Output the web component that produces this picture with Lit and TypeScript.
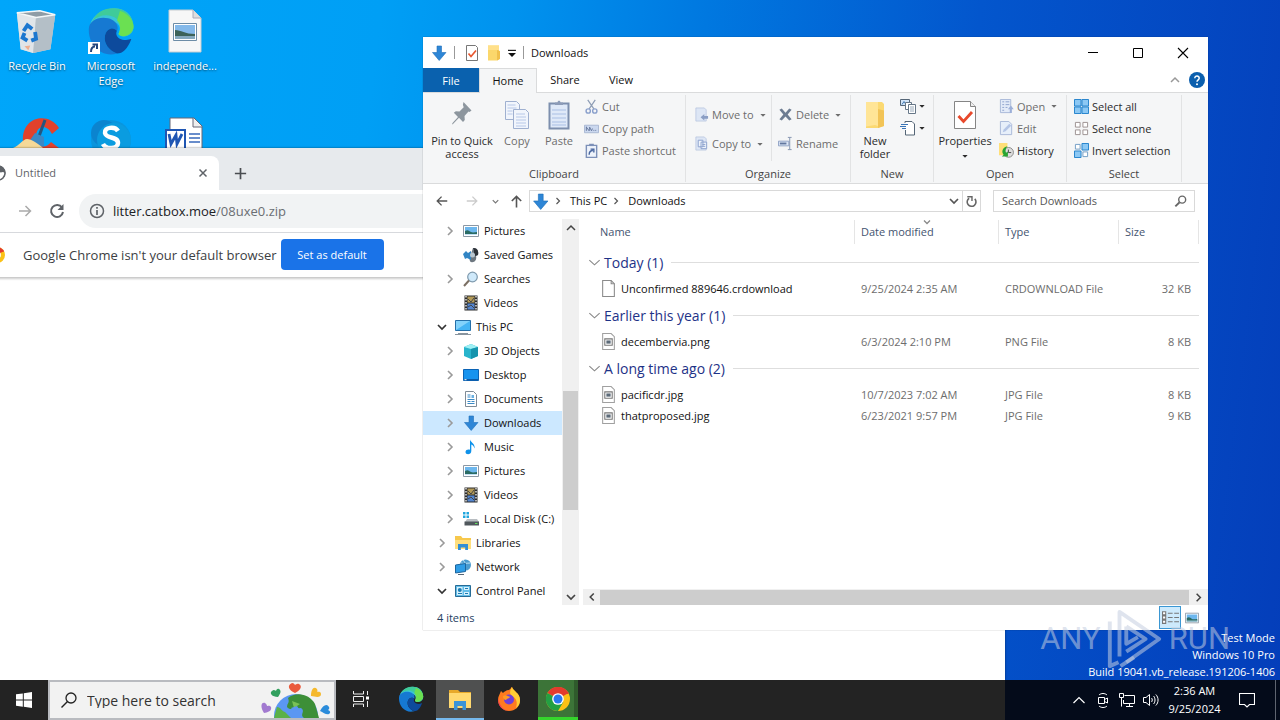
import { LitElement, html, css, svg, nothing } from "lit";
import { customElement } from "lit/decorators.js";
import { classMap } from "lit/directives/class-map.js";

const art: Record<string, unknown> = {
  down: svg`<path d="M6 1h4.500v6.500H15L8.200 15.500 1.500 7.500H6z" fill="#2e86d6" stroke="#1e6fba" stroke-width=".6"/>`,
  check: svg`<path d="M2.500.5h9l2 2v13h-11z" fill="#fff" stroke="#777"/><path d="M4.500 8.500l2.500 3 5-6" fill="none" stroke="#e8572f" stroke-width="1.700"/>`,
  folder: svg`<path d="M2 .5h11v14l-2 1H2z" fill="#fbd76b"/><path d="M11 5l3 1v8l-3 1.500z" fill="#f0c04c"/><path d="M2 .5h11v4.500H2z" fill="#ffe08a"/>`,
  caretbar: svg`<path d="M3.500 5h9" stroke="#111" stroke-width="1.300"/><path d="M3.500 8h9L8 12.500z" fill="#111"/>`,
  caret: svg`<path d="M4.500 6.500h7L8 10.200z" fill="currentColor"/>`,
  min: svg`<path d="M3 7.500h10" stroke="#000"/>`,
  max: svg`<path d="M3.500 3.500h9v9h-9z" fill="none" stroke="#000"/>`,
  close: svg`<path d="M3 3l10 10M13 3L3 13" stroke="#000" stroke-width="1.100"/>`,
  up: svg`<path d="M4 10l4-4 4 4" fill="none" stroke="currentColor" stroke-width="1.500"/>`,
  trayup: svg`<path d="M2.500 11L8 5.500l5.500 5.500" fill="none" stroke="currentColor" stroke-width="1.200"/>`,
  chevd: svg`<path d="M4 6l4 4 4-4" fill="none" stroke="currentColor" stroke-width="1.700"/>`,
  chevr: svg`<path d="M6 4l4 4-4 4" fill="none" stroke="currentColor" stroke-width="1.600"/>`,
  chevl: svg`<path d="M10 4L6 8l4 4" fill="none" stroke="currentColor" stroke-width="1.800"/>`,
  wide: svg`<path d="M2.500 5.500L8 10.500l5.500-5" fill="none" stroke="currentColor" stroke-width="1.200"/>`,
  help: svg`<circle cx="8" cy="8" r="8" fill="#0b5fae"/><path d="M5.800 6.200c0-3 4.500-2.800 4.400 0 0 1.600-2.200 1.700-2.200 3.600" fill="none" stroke="#fff" stroke-width="1.500"/><circle cx="8" cy="12.200" r="1" fill="#fff"/>`,
  pin: svg`<path d="M15.500 3l8 8.500-2 1.500-1-.5-4 4.500.3 4-1.800 2-4-4.200L5 25l-1 .5.500-1.500 5.500-6-4.200-4.200 2-1.500 3.700.3 4.200-4.300-.8-2.500z" fill="#8d969e" transform="translate(2 0)"/>`,
  copy: svg`<g fill="#f1f5fc" stroke="#9fb0d0"><path d="M4.500 2.500h11l3 3v15h-14z"/><path d="M12.500 10.500h12l3 3v16h-15z"/></g><path d="M6.500 6h8M6.500 9h9M6.500 12h5M6.500 15h5M15 15h9M15 18h10M15 21h10M15 24h10M15 27h10" stroke="#b7c8e8"/>`,
  paste: svg`<path d="M6.500 4.500h19v25h-19z" fill="#dfe9f8" stroke="#7d8fae" stroke-width="2"/><path d="M12 6V3.500h2.500C14.500 1 17.500 1 17.500 3.500H20V6z" fill="#8d9cb8"/><path d="M9 11h14M9 15h14M9 19h14M9 23h14M9 26h14" stroke="#a9bfe4"/>`,
  cut: svg`<path d="M4 1l6.500 9.500M12 1L5.500 10.500" stroke="#8e9db5" stroke-width="1.300"/><g fill="none" stroke="#8aa0cc" stroke-width="1.500"><circle cx="4.500" cy="12.800" r="2.300"/><circle cx="11.500" cy="12.800" r="2.300"/></g>`,
  path: svg`<path d="M.5 4.500h15v8H.5z" fill="#cbd8ef" stroke="#a7b6d2"/><path d="M2.500 6v4.500M2.500 6.500l3 4 .5-4 2 4 1-2.500M10 10h1M12 10h1" stroke="#65789d" fill="none"/>`,
  pshort: svg`<path d="M2.500 2.500h11v13h-11z" fill="#eef3fb" stroke="#7c90b8" stroke-width="1.500"/><path d="M5.500.8h5v2.500h-5z" fill="#7c90b8"/><path d="M5.500 12.500c0-3 1-4.500 4-4.500M7 6.500h3.500V10" fill="none" stroke="#49679f" stroke-width="1.500"/>`,
  moveto: svg`<path d="M2 1h9l2 2v12H2z" fill="#dde6f5" stroke="#b6c4df" stroke-width=".8"/><path d="M7 11l4-3.500v2h4v3h-4v2z" fill="#8b9ec4"/>`,
  copyto: svg`<path d="M2 1h9l2 2v12H2z" fill="#dde6f5" stroke="#b6c4df" stroke-width=".8"/><path d="M4.500 4.500h5v7h-5zM7.500 6.500h6v7h-6z" fill="#eef3fb" stroke="#8ba0cc"/><path d="M9 9h3M9 11h3" stroke="#8ba0cc"/>`,
  del: svg`<path d="M1.500 3L4 1.500l4 4.500 4-4.500L14.500 3 10.300 8l4.200 5-2.500 1.500-4-4.500-4 4.500L1.500 13l4.200-5z" fill="#6d7c92"/>`,
  rename: svg`<path d="M.5 5.500h11v5H.5z" fill="#dce6f6" stroke="#8fa1c4"/><path d="M2 8h7" stroke="#62779f" stroke-width="2"/><path d="M12.500 2v12M10.500 1.500h4M10.500 14.500h4" stroke="#8191ae"/>`,
  nfolder: svg`<path d="M7 3h16l2 2v22l-6 2H7z" fill="#fbd972"/><path d="M7 3h12v24l-3-1-9 1.500z" fill="#ffe597"/><path d="M19 10l6 1.500V27l-6 2z" fill="#f2c457"/>`,
  newitem: svg`<path d="M.5 1.500h9v6h-9z" fill="#d2e4f7" stroke="#567"/><path d="M2 6.500l2-3 2 3" stroke="#3f79b4" fill="none"/><path d="M5.500 4.500h6v7h-6z" fill="#fff" stroke="#678"/><path d="M8.500 6.500h7v9h-7z" fill="#fff" stroke="#678"/><path d="M10 9h4M10 11h4M10 13h4" stroke="#9ab"/>`,
  easy: svg`<path d="M5 1.500h7l2.500 2.500v11H5.500V10M5 1.500V3" fill="#fff" stroke="#567"/><path d="M1 4.500h7M0 6.500h6M2 8.500h4" stroke="#3b75b8"/>`,
  props: svg`<path d="M5.500 2.500h16l5 5v22h-21z" fill="#fff" stroke="#858585"/><path d="M21.500 2.500v5h5" fill="#eee" stroke="#858585"/><path d="M9.500 17l5 5.500L23 13" fill="none" stroke="#e8492c" stroke-width="2.800"/>`,
  open: svg`<path d="M1.500.5h11v14h-11z" fill="#e3ebf8" stroke="#a8b8d8"/><path d="M3.500 3h2M3.500 6h2M3.500 9h2M3.500 12h2M7 3h4M7 6h4M7 9h2" stroke="#8da1cc"/><path d="M11.500 15V11H9.500l3.200-4 3 4h-2V15z" fill="#9cafd8"/>`,
  edit: svg`<path d="M1.500.5h9l3 3v11h-12z" fill="#e7effa" stroke="#a8b8d8"/><path d="M4 12l1-3 6-6 2 2-6 6z" fill="#b4c5e6"/>`,
  history: svg`<path d="M0 0h9v11l-2 2H0z" fill="#ffdf78"/><circle cx="10.200" cy="10" r="5.200" fill="#ddd" stroke="#888"/><path d="M10 7v3.200h3" stroke="#444" fill="none"/><path d="M9 3.500C4 4.500 2 9.500 5 12.500L3 14.500H9.500V9L7.500 10.500C6.500 8.500 7 6 9 3.500z" fill="#28a532"/>`,
  selall: svg`<g fill="#8cc8f4" stroke="#1d7fcb"><path d="M.5.5h7v7h-7zM8.500.5h7v7h-7zM.5 8.500h7v7h-7zM8.500 8.500h7v7h-7z"/></g>`,
  selnone: svg`<g fill="#fff" stroke="#9a8f8f"><path d="M1.500 1.500h5v5h-5zM9.500 1.500h5v5h-5zM1.500 9.500h5v5h-5zM9.500 9.500h5v5h-5z"/></g>`,
  selinv: svg`<g fill="#fff" stroke="#6f9cc4"><path d="M1.500 1.500h5v5h-5zM9.500 9.500h5v5h-5z"/></g><g fill="#8cc8f4" stroke="#1d7fcb"><path d="M8.500.5h7v7h-7zM.5 8.500h7v7h-7z"/></g>`,
  left: svg`<path d="M14 8H3M7.500 3L2.500 8l5 5" fill="none" stroke="currentColor" stroke-width="1.500"/>`,
  right: svg`<path d="M2 8h11M8.500 3l5 5-5 5" fill="none" stroke="currentColor" stroke-width="1.500"/>`,
  upa: svg`<path d="M8 14.500V3M3 7.500l5-5 5 5" fill="none" stroke="#555" stroke-width="1.700"/>`,
  refresh: svg`<path d="M11.500 5.200A4.700 4.700 0 1 1 5.500 4.500" fill="none" stroke="#666" stroke-width="1.700"/><path d="M3.500 3h5v4.500" fill="none" stroke="#666" stroke-width="1.500"/>`,
  find: svg`<circle cx="9.800" cy="6" r="3.700" fill="none" stroke="#666" stroke-width="1.500"/><path d="M7 8.800L2.500 13.200" stroke="#666" stroke-width="2"/>`,
  pictures: svg`<path d="M.5 2.500h15v11H.5z" fill="#fff" stroke="#8b98a5"/><path d="M2 4h12v8H2z" fill="#6db7ee"/><path d="M2 8c3-2 4 0 6 1s4 0 6 0v3H2z" fill="#2a6b63"/><path d="M2 11h12v1H2z" fill="#bfe0f5"/>`,
  games: svg`<path d="M10 1c4-.5 6 3 5 7l-2 1c1 3-1 6-3 6-3 1-4-2-3-5z" fill="#6d7780"/><path d="M10 1c4-.5 6 3 5 7l-3 1c-2-2 0-5-2-8z" fill="#2c3137"/><path d="M0 7l3-3 2 2 3-2v9l-4-2-2 1z" fill="#3285c4"/><circle cx="9.500" cy="8" r="2.500" fill="#b8c6d0"/>`,
  searches: svg`<circle cx="9.500" cy="6" r="4.800" fill="#cfe9fa" stroke="#7e99ad" stroke-width="1.200"/><path d="M6 9.500L1 15" stroke="#7b6f63" stroke-width="2"/>`,
  videos: svg`<path d="M1.500.5h13v15h-13z" fill="#2c2c2c"/><path d="M4.500 1.500h7v6h-7z" fill="#b39a58"/><path d="M4.500 8.500h7v6h-7z" fill="#5284ce"/><path d="M5 4l3 3 3-4M5 12l3-2 3 3" stroke="#444" fill="none"/><path d="M3 1v14M13 1v14" stroke="#ddd" stroke-width="1.500" stroke-dasharray="1.500 1.500"/>`,
  pc: svg`<path d="M.5 1.500h15v10H.5z" fill="#45b4f4" stroke="#256fa8"/><path d="M1 2h14L1 11z" fill="#83d2fb"/><path d="M3 14.500h10M0 15.500h16" stroke="#88949e"/>`,
  objects: svg`<path d="M1 4l7-3 7 3v9l-7 3-7-3z" fill="#28b4cc"/><path d="M1 4l7-3 7 3-7 2z" fill="#9ff0f4"/><path d="M8 6l7-2v9l-7 3z" fill="#1594ad"/>`,
  desktop: svg`<path d="M.5 2.500h15v11H.5z" fill="#1793ee" stroke="#0a63b5"/><path d="M1 12h14v1.500H1z" fill="#0c5ba7"/><path d="M1.500 12.700h2" stroke="#fff"/>`,
  documents: svg`<path d="M2.500.5h8l3 3v12h-11z" fill="#fff" stroke="#7f8b96"/><path d="M4.500 4h3M4.500 6h3M4.500 8.500h7M4.500 10.500h3M8.500 10.500h3M4.500 12.500h7" stroke="#3b8ac6"/><path d="M8.500 4h2.500v3H8.500z" fill="#6bb1e2"/>`,
  music: svg`<path d="M7 .5c.5 3 5.500 4 4.500 9-.5-2.500-2-3.500-3.200-4v6.500C8.300 16 2.500 16.200 2.500 13c0-2.500 3-3 4.500-2.200z" fill="#0f92ea"/>`,
  disk: svg`<path d="M0 1h2.500v2.500H0zM3.500 1H6v2.500H3.500zM0 4.500h2.500V7H0zM3.500 4.500H6V7H3.500z" fill="#20a6dd"/><path d="M4 8h10l2 3H2z" fill="#b8bdc1"/><path d="M1.500 10.500h14.500v4H1.500z" fill="#50575c"/><path d="M12 12.500h2.500" stroke="#5fe05a"/>`,
  libraries: svg`<path d="M0 1h6l1.500 2H16v11H0z" fill="#f7c84c"/><path d="M0 5h16v9H0z" fill="#ffdf7e"/><path d="M3 15V9h10v6h-2.800v-2.500H5.800V15z" fill="#318fd6"/>`,
  network: svg`<circle cx="10.500" cy="6" r="5.500" fill="#4b9ccf"/><path d="M6 4c3 1 6 0 9 0M8 1c3 3 3 7 2 9" stroke="#bfe3f5" fill="none"/><path d="M.5 6l10-1.500v8L.5 14z" fill="#2f9de6" stroke="#1c659e"/><path d="M3 15.500h6" stroke="#567"/>`,
  control: svg`<path d="M.5 2.500h15v11H.5z" fill="#64bde8" stroke="#276b95"/><path d="M2 4h5.500v8H2zM9 4h5v3H9zM9 9h5v3H9z" fill="#d8f1fc"/><circle cx="4.800" cy="7" r="2" fill="#1c7db4"/><path d="M10 5.500h3M10 10.500h3M3 10.500h4" stroke="#1c7db4"/>`,
  blank: svg`<path d="M2.500.5h8l3 3v12h-11z" fill="#fff" stroke="#8a8a8a"/><path d="M10.500.5v3h3" fill="none" stroke="#8a8a8a"/>`,
  imgfile: svg`<path d="M2.500.5h8l3 3v12h-11z" fill="#fff" stroke="#a0a0a0"/><path d="M4.500 5.500h7v6h-7z" fill="#fff" stroke="#777"/><path d="M6 7h4v3H6z" fill="#5c6a78"/>`,
  details: svg`<g fill="#fff" stroke="#777"><path d="M.5 2.500h3v3h-3zM.5 6.500h3v3h-3zM.5 10.500h3v3h-3z"/></g><path d="M5.500 4H10M5.500 8H10M5.500 12H10M11.500 4H16M11.500 8H16M11.500 12H16" stroke="#777"/>`,
  globe: svg`<circle cx="8" cy="8" r="7.500" fill="#5f6368"/><path d="M6 1c-1 2 1 2 1 4s3 3 6 2l2 1c0 4-3 6-6 6.500 0-3-3-2-4-5S1 7 1 7c1-3 3-5 5-6z" fill="#fff"/><circle cx="8" cy="8" r="7" fill="none" stroke="#5f6368" stroke-width="1.500"/>`,
  x: svg`<path d="M4.500 4.500l7 7M11.500 4.500l-7 7" stroke="#5f6368" stroke-width="1.500"/>`,
  plus: svg`<path d="M8 2v12M2 8h12" stroke="#4a4d51" stroke-width="1.800"/>`,
  reload: svg`<path d="M13 4.500A6 6 0 1 0 14 9" fill="none" stroke="#5f6368" stroke-width="2"/><path d="M14.500 1v6h-6z" fill="#5f6368"/>`,
  info: svg`<circle cx="8" cy="8" r="6.500" fill="none" stroke="#5f6368" stroke-width="1.500"/><path d="M8 7v5M8 4v1.700" stroke="#5f6368" stroke-width="1.700"/>`,
  chrome: svg`<circle cx="8" cy="8" r="8" fill="#fbc116"/><path d="M8 8L1 4A8 8 0 0 1 15 4z" fill="#e33b2e"/><path d="M8 8L1 4A8 8 0 0 0 8 16l3.500-6z" fill="#23a043"/><path d="M8 4.200h7" stroke="#e33b2e" stroke-width=".8"/><circle cx="8" cy="8" r="3.900" fill="#fff"/><circle cx="8" cy="8" r="3" fill="#2a78f0"/>`,
  edge: svg`<path d="M2 12C5-1 30-5 31 13c0 7-8 8-10 5 3-6-2-9-7-8C8 9 3 11 2 12z" fill="#39c6d6"/><path d="M14 1.200C25-1 31 6 31 13c0 7-9 8-10 5 3-5 1-8-1-10-5-4-12-3-16 1C6 4 10 2 14 1.200z" fill="#3fcb9a"/><path d="M22 2.500C29 5 31 10 31 13c0 6-8 8-10 5 2-4 1-7-1-9z" fill="#6be052"/><path d="M1.200 15C1 9 8 6 14 7.500c5 1 7.500 5 6 8.500-2-3-7-2-8 3-1 6 3 10 8 12C9 34 1 25 1.200 15z" fill="#1679d2"/><path d="M12 19c1-5 6-6 8-3-1 1-1 6 6 6 2 0 3-1 3.500-.5C27 28 24 31 20 31c-5-2-9-6-8-12z" fill="#0d4a9c"/>`,
  bin: svg`<path d="M4 6l24-2 16 4-5 36-18 4-13-4z" fill="#cfd6db"/><path d="M4 6l20 4-3 38-13-4z" fill="#e0e5e9"/><path d="M24 10l20-2-5 36-18 4z" fill="#b4bfc7"/><path d="M4 6l24-2 16 4-20 3z" fill="#8f9ca5" stroke="#f4f7f8" stroke-width="1.500"/><g fill="none" stroke="#1c77cf" stroke-width="4"><path d="M11 25l4-6 5 4M23 26l1 7-5 2M15 35l-5-3 2-5"/></g><path d="M12 41l6-1-2 5z" fill="#efb091"/>`,
  picfile: svg`<path d="M8 3h24l8 8v34H8z" fill="#f7f7f7" stroke="#c6ccd0"/><path d="M32 3v8h8" fill="#ddd" stroke="#aab"/><path d="M12.500 16.500h23v17h-23z" fill="#fff" stroke="#6d8ca6"/><path d="M14 18h20v14H14z" fill="#84b9ea"/><path d="M14 23c6 0 10 4 20 4v5H14z" fill="#3c6258"/><path d="M14 29h20v3H14z" fill="#85a9be"/>`,
  ccleaner: svg`<path d="M46 12C35-5 8 1 10 26c2 16 25 22 36 6l-8-6c-6 8-15 5-15-5 0-11 10-14 16-3z" fill="#e2412c"/><path d="M32 4l-7 19" stroke="#24557f" stroke-width="3"/><path d="M22 17l9 4 0 9-18 0z" fill="#3a88c6"/><path d="M0 32c6-2 10-9 14-9s12 5 16 9z" fill="#f5d998"/>`,
  skype: svg`<circle cx="24" cy="24" r="20" fill="#0a95dd"/><circle cx="17" cy="17" r="13" fill="#0b84cf"/><circle cx="27" cy="24" r="17" fill="#0a9ce0"/><path d="M31 15c-3-5-14-4-13 2 1 6 13 3 13 10 0 6-12 7-15 1" fill="none" stroke="#fff" stroke-width="4.500"/>`,
  word: svg`<path d="M9 2h24l8 8v36H9z" fill="#fff" stroke="#667"/><path d="M32 2v9h9" fill="#eee" stroke="#667"/><path d="M28 18h11M28 22h11M28 26h11" stroke="#3768ba" stroke-width="1.500"/><path d="M4 13h21v23H4z" fill="#1f56b3"/><path d="M6 15h17v19H6z" fill="#fff"/><path d="M8 18l2 10 5-9 1 9 5-10" fill="none" stroke="#1f56b3" stroke-width="2.800"/>`,
  start: svg`<path d="M0 2.300L6.800 1.400v6.200H0zM7.800 1.200L16 0v7.600H7.800zM0 8.500h6.800v6.200L0 13.700zM7.800 8.500H16V16l-8.200-1.200z" fill="#fff"/>`,
  lens: svg`<circle cx="10" cy="6" r="5" fill="none" stroke="#222" stroke-width="1.300"/><path d="M6.500 9.500L.5 15.500" stroke="#222" stroke-width="1.400"/>`,
  taskview: svg`<path d="M.5 0v3h10V0M.5 16v-3h10v3M.5 5.500h10v5H.5zM14.500 0v4M14.500 10v6" fill="none" stroke="#eee"/><path d="M13 5.500h3v3h-3z" fill="#fff"/>`,
  explorer: svg`<path d="M1 3h9l2 2h11v16H1z" fill="#e7a92a"/><path d="M1 6h22v15H1z" fill="#ffd970"/><path d="M6 23v-9h12v9h-3.500v-4h-5v4z" fill="#3a94d8"/>`,
  firefox: svg`<path d="M12 3c2-1 2-3 3-3 1 4 8 6 8 13S18 24 12 24 1 19 1 13c0-4 2-6 3-9l2 2c1-1 3-3 6-3z" fill="#ff7a1f"/><path d="M15 0c1 4 8 6 8 13 0 3-1 6-4 8 2-6 0-10-4-12-3-2-2-6 0-9z" fill="#ffce35"/><path d="M1.500 11C2 20 8 24 13 24 5 24 0 18 1.500 11z" fill="#f0385c"/><circle cx="12" cy="12.500" r="5" fill="#6d40d8"/><path d="M6 9c3-2 5 0 7 1-1 2-3 1-4 3-2 0-3-2-3-4z" fill="#ff9a25"/>`,
  meet: svg`<path d="M3.500 5.500h6v6h-6zM9.500 7.500l3-1.500v5l-3-1.500M4 3c2-2 6-2 8 0M4 14c2 2 6 2 8 0" fill="none" stroke="#fff"/>`,
  net: svg`<path d="M5.500 3.500h10v8H4.500V8M10.500 11.500v3M7 14.500h7M.5 1.500h4v4h-4zM2.500 5.500v9" fill="none" stroke="#fff"/>`,
  sound: svg`<path d="M.5 5.500H3l3.500-3v11L3 10.500H.500z" fill="none" stroke="#fff"/><path d="M8.500 6c1 1 1 3 0 4M10.500 4c2 2 2 6 0 8M12.800 2.500c3 3 3 8 0 11" fill="none" stroke="#fff"/>`,
  note: svg`<path d="M.5 1.500h15v11h-5L8 15l-2.500-2.500h-5z" fill="none" stroke="#fff" stroke-width="1.100"/>`,
  earth: svg`<circle cx="35" cy="34" r="22" fill="#5b97f2"/><path d="M27 16c8-7 22-4 27 6l4 14H43c-5-3 2-7-3-10-5 0-11 3-14-1 0-4 3-4 1-9z" fill="#3d8f38"/><path d="M16 25c4 0 4 4 8 5l6 6H13z" fill="#5bb148"/><path d="M31 19l8 3-6 4z" fill="#79c157"/><path d="M30 26l6-2 2 3-5 3z" fill="#5b97f2"/><path d="M34 11c-7-3-8-8-3-10 2 0 3 2 3 2s2-2 4-1c4 2 1 7-4 9z" fill="#ea5a3d"/><path d="M17 15c-6 0-9-4-6-6 2-2 4 0 4 0s1-3 3-2c3 2 1 5-1 8z" fill="#32a05e"/><path d="M50 14c0-7 3-10 6-7 1 2 0 3 0 3s4-1 4 2c0 4-5 3-10 2z" fill="#f5b92d"/><path d="M3 31c-4-6-3-11 1-10 2 1 2 3 2 3s3-1 4 1c1 4-3 5-7 6z" fill="#a27ad0"/><path d="M59 29c3-6 7-8 9-4 1 2-1 3-1 3s3 1 2 3c-2 3-6 0-10-2z" fill="#2b8cdb"/>`,
  play: svg`<g fill="none" stroke="currentColor" stroke-width="4" stroke-linejoin="round"><path d="M13 50V4l41 28-34 24"/><path d="M3 14v46l9-4M20 19l20 13-20 13M20 19v18l12-7M14 60l14-9"/></g>`,
};

const icon = (name: string, size = 16, box = 16, cls = "") =>
  html`<svg class="ic ${cls}" width=${size} height=${size} viewBox="0 0 ${box} ${box}" aria-hidden="true">${art[name]}</svg>`;

const base = css`
  * { box-sizing: border-box; }
  button, input, a { font: inherit; color: inherit; }
  button { background: none; border: 0; padding: 0; margin: 0; display: flex; align-items: center; justify-content: center; white-space: nowrap; }
  input { border: 0; padding: 0; margin: 0; background: none; min-width: 0; outline: none; }
  a { text-decoration: none; }
  ul { list-style: none; margin: 0; padding: 0; }
  .ic { display: block; flex: none; }
`;

@customElement("desktop-ribbon")
class DesktopRibbon extends LitElement {
  static styles = [base, css`
    :host { display: flex; height: 92px; background: #f5f6f7; border-top: 1px solid #dadbdc; border-bottom: 1px solid #dadbdc; color: #2b2b2b; padding: 2px 0 0; }
    .group { flex: none; display: flex; flex-direction: column; border-right: 1px solid #e2e3e4; margin-bottom: 1px; }
    .body { flex: none; display: flex; height: 66px; }
    .title { margin-top: 5px; line-height: 16px; text-align: center; color: #444; }
    .big { flex-direction: column; justify-content: flex-start; gap: 3px; padding-top: 4px; line-height: 13px; white-space: normal; }
    .pin { width: 68px; }
    .mid { width: 42px; }
    .wide { width: 54px; }
    .col { display: flex; flex-direction: column; }
    .small { height: 22px; justify-content: flex-start; gap: 3px; }
    .loose { padding-top: 5px; }
    .loose .small { height: 29px; }
    .rule { border-left: 1px solid #e2e3e4; margin-right: 6px; }
    button:disabled { color: #6d6d6d; }
    .clip { width: 263px; }
    .clip .body { padding-left: 5px; }
    .clip .col { padding-left: 4px; }
    .org { width: 165px; }
    .org .body { padding-left: 8px; }
    .org .first { width: 77px; }
    .new { width: 83px; }
    .new .wide { width: 48px; }
    .newcol { padding-left: 1px; }
    .newcol .small { gap: 0; }
    .open { width: 133px; }
    .open .wide { margin-left: 4px; }
    .open .col { padding-left: 7px; }
    .select { width: 115px; }
    .select .col { padding-left: 7px; }
  `];
  small(i: string, t: string, off = false, caret = false) {
    return html`<button class="small" ?disabled=${off}>${icon(i, 15)}<span>${t}</span>${caret ? icon("caret", 12) : nothing}</button>`;
  }
  render() {
    return html`
      <section class="group clip"><div class="body">
        <button class="big pin">${icon("pin", 32, 32)}<span>Pin to Quick access</span></button>
        <button class="big mid" disabled>${icon("copy", 32, 32)}<span>Copy</span></button>
        <button class="big mid" disabled>${icon("paste", 32, 32)}<span>Paste</span></button>
        <div class="col">${this.small("cut", "Cut", true)}${this.small("path", "Copy path", true)}${this.small("pshort", "Paste shortcut", true)}</div>
      </div><div class="title">Clipboard</div></section>
      <section class="group org"><div class="body">
        <div class="col loose first">${this.small("moveto", "Move to", true, true)}${this.small("copyto", "Copy to", true, true)}</div>
        <div class="rule"></div>
        <div class="col loose">${this.small("del", "Delete", true, true)}${this.small("rename", "Rename", true)}</div>
      </div><div class="title">Organize</div></section>
      <section class="group new"><div class="body">
        <button class="big wide">${icon("nfolder", 32, 32)}<span>New<br>folder</span></button>
        <div class="col newcol">
          <button class="small" aria-label="New item">${icon("newitem", 16)}${icon("caret", 12)}</button>
          <button class="small" aria-label="Easy access">${icon("easy", 16)}${icon("caret", 12)}</button>
        </div>
      </div><div class="title">New</div></section>
      <section class="group open"><div class="body">
        <button class="big wide">${icon("props", 32, 32)}<span>Properties</span>${icon("caret", 12)}</button>
        <div class="col">${this.small("open", "Open", true, true)}${this.small("edit", "Edit", true)}${this.small("history", "History")}</div>
      </div><div class="title">Open</div></section>
      <section class="group select"><div class="body">
        <div class="col">${this.small("selall", "Select all")}${this.small("selnone", "Select none")}${this.small("selinv", "Invert selection")}</div>
      </div><div class="title">Select</div></section>`;
  }
}

type TreeItem = { icon: string; text: string; state?: "open" | "closed"; top?: boolean; on?: boolean };
const tree: TreeItem[] = [
  { icon: "pictures", text: "Pictures", state: "closed" },
  { icon: "games", text: "Saved Games" },
  { icon: "searches", text: "Searches", state: "closed" },
  { icon: "videos", text: "Videos" },
  { icon: "pc", text: "This PC", state: "open", top: true },
  { icon: "objects", text: "3D Objects", state: "closed" },
  { icon: "desktop", text: "Desktop", state: "closed" },
  { icon: "documents", text: "Documents", state: "closed" },
  { icon: "down", text: "Downloads", state: "closed", on: true },
  { icon: "music", text: "Music", state: "closed" },
  { icon: "pictures", text: "Pictures", state: "closed" },
  { icon: "videos", text: "Videos", state: "closed" },
  { icon: "disk", text: "Local Disk (C:)", state: "closed" },
  { icon: "libraries", text: "Libraries", state: "closed", top: true },
  { icon: "network", text: "Network", state: "closed", top: true },
  { icon: "control", text: "Control Panel", state: "open", top: true },
];
const groups = [
  { title: "Today (1)", files: [["blank", "Unconfirmed 889646.crdownload", "9/25/2024 2:35 AM", "CRDOWNLOAD File", "32 KB"]] },
  { title: "Earlier this year (1)", files: [["imgfile", "decembervia.png", "6/3/2024 2:10 PM", "PNG File", "8 KB"]] },
  { title: "A long time ago (2)", files: [
    ["imgfile", "pacificdr.jpg", "10/7/2023 7:02 AM", "JPG File", "8 KB"],
    ["imgfile", "thatproposed.jpg", "6/23/2021 9:57 PM", "JPG File", "9 KB"]] },
];

@customElement("explorer-window")
class ExplorerWindow extends LitElement {
  static styles = [base, css`
    :host { display: flex; flex-direction: column; background: #fff; color: #111; box-shadow: 0 0 1px rgba(0,0,0,.4); overflow: hidden; }
    .title { flex: none; height: 31px; display: flex; align-items: center; padding: 0 3px 0 8px; }
    .title .sep { width: 1px; height: 13px; background: #999; }
    .quick { display: flex; gap: 6px; margin: 0 4px 0 9px; }
    .quick button:last-child { margin-left: -3px; }
    .first { margin-right: 7px; }
    .name { margin-left: 7px; flex: 1; }
    .wb { width: 45px; height: 30px; }
    .tabs { flex: none; height: 24px; display: flex; }
    .tabs button { width: 56px; margin-bottom: -1px; padding-bottom: 2px; z-index: 1; }
    .tabs .file { background: #0a61ae; color: #fff; margin-bottom: 0; padding-bottom: 0; }
    .tabs .home { width: 58px; background: #f5f6f7; border: 1px solid #dadbdc; border-bottom: 0; }
    .tabs .fill { flex: 1; }
    .tabs .tool { width: 22px; color: #999; }
    .addr { flex: none; height: 34px; display: flex; padding: 6px 13px 6px 4px; color: #333; }
    .nb { width: 30px; color: #555; }
    .nb.off { color: #ccc; }
    .rc { width: 16px; color: #777; }
    .ub { width: 26px; }
    .crumbs { flex: 1; display: flex; align-items: center; border: 1px solid #d9d9d9; padding-left: 2px; margin-right: 12px; color: #111; }
    .crumbs .chev { color: #555; margin: 0 6px 0 3px; }
    .crumbs .part { padding-bottom: 2px; }
    .crumbs .grow { flex: 1; }
    .crumbs .dd { color: #555; }
    .crumbs .rf { border-left: 1px solid #d9d9d9; height: 20px; width: 18px; }
    .search { width: 202px; display: flex; align-items: center; border: 1px solid #d9d9d9; padding: 0 6px 0 8px; }
    .search input { flex: 1; padding-bottom: 2px; }
    .search input::placeholder { color: #555; opacity: 1; }
    .body { flex: 1; min-height: 0; display: flex; }
    .nav { width: 139px; padding-top: 1px; overflow: hidden; flex: none; }
    .nav a { display: flex; align-items: center; height: 24px; padding-left: 19px; white-space: nowrap; }
    .nav a.top { padding-left: 11px; }
    .nav a.on { background: #cce8ff; }
    .nav .arrow { color: #9a9a9a; margin-right: 5px; }
    .nav .arrow.dk { color: #333; }
    .nav .txt { margin-left: 5px; padding-bottom: 2px; }
    .vs { flex: none; width: 17px; margin: 1px 4px 0 0; background: #f0f0f0; display: flex; flex-direction: column; color: #444; }
    .vs button { height: 17px; }
    .vs .before { height: 155px; }
    .vs .thumb { height: 119px; background: #cdcdcd; margin: 0 1px; }
    .vs .rest { flex: 1; }
    .list { flex: 1; min-width: 0; display: flex; flex-direction: column; }
    table { border-collapse: collapse; table-layout: fixed; width: 100%; color: #6d6d6d; }
    td, th { padding: 0 0 2px 6px; font-weight: 400; text-align: left; white-space: nowrap; }
    th { height: 29px; color: #44546f; background: linear-gradient(#e5e5e5, #e5e5e5) right 2px / 1px 24px no-repeat; position: relative; }
    th:first-child, td.f { padding-left: 17px; }
    th:last-child { background: none; }
    th .sort { position: absolute; left: 66px; top: -2px; color: #888; }
    .cd { width: 144px; } .ct { width: 120px; } .cs { width: 80px; } .ce { width: 9px; }
    td { height: 21px; }
    td.sz { text-align: right; padding-right: 8px; }
    td.f a { display: flex; align-items: center; gap: 4px; color: #111; }
    td.grp { height: 32px; padding: 0 0 2px 4px; font-size: 14px; }
    .gh { display: flex; align-items: center; color: #1e3287; }
    .gh .tw { color: #888; margin-right: 2px; }
    .gh .ln { flex: 1; height: 1px; background: #dedede; margin-left: 8px; }
    .gap { flex: 1; }
    .hs { height: 16px; display: flex; background: #f0f0f0; color: #444; }
    .hs button { width: 17px; }
    .hs button:last-child { width: 19px; }
    .hs .thumb { flex: 1; background: #cdcdcd; margin-top: 1px; }
    .status { flex: none; height: 25px; display: flex; align-items: center; padding: 0 5px 0 14px; color: #26405f; }
    .status .grow { flex: 1; }
    .status button { width: 22px; height: 23px; }
    .status .on { background: #cdeafc; border: 1px solid #3b97d3; }
  `];
  render() {
    return html`
      <header class="title">
        ${icon("down", 16, 16, "first")}<span class="sep"></span>
        <div class="quick">
          <button aria-label="Properties">${icon("check", 16)}</button><button aria-label="New folder">${icon("folder", 16)}</button><button aria-label="Customize">${icon("caretbar", 14)}</button>
        </div><span class="sep"></span><span class="name">Downloads</span>
        <button class="wb" aria-label="Minimize">${icon("min")}</button><button class="wb" aria-label="Maximize">${icon("max")}</button><button class="wb" aria-label="Close">${icon("close")}</button>
      </header>
      <nav class="tabs">
        <button class="file">File</button><button class="home">Home</button><button>Share</button><button>View</button>
        <span class="fill"></span><button class="tool" aria-label="Collapse ribbon">${icon("up", 16)}</button><button class="tool" aria-label="Help">${icon("help", 16)}</button>
      </nav>
      <desktop-ribbon></desktop-ribbon>
      <div class="addr">
        <button class="nb" aria-label="Back">${icon("left", 14)}</button><button class="nb off" aria-label="Forward">${icon("right", 14)}</button>
        <button class="rc" aria-label="Recent">${icon("chevd", 11)}</button><button class="ub" aria-label="Up">${icon("upa", 15)}</button>
        <div class="crumbs">${icon("down", 17)}${icon("chevr", 12, 16, "chev")}<button class="part">This PC</button>${icon("chevr", 12, 16, "chev")}<button class="part">Downloads</button>
          <span class="grow"></span><button class="dd" aria-label="History">${icon("chevd", 16)}</button><button class="rf" aria-label="Refresh">${icon("refresh", 15)}</button></div>
        <label class="search"><input type="text" aria-label="Search Downloads" placeholder="Search Downloads">${icon("find", 15)}</label>
      </div>
      <div class="body">
        <ul class="nav">${tree.map((n) => html`<li><a href="#" class=${classMap({ top: !!n.top, on: !!n.on })}>
          <svg class="ic arrow ${n.state === "open" ? "dk" : ""}" width="16" height="16" viewBox="0 0 16 16">${n.state ? art[n.state === "open" ? "chevd" : "chevr"] : nothing}</svg>${icon(n.icon, 16)}<span class="txt">${n.text}</span></a></li>`)}</ul>
        <div class="vs"><button aria-label="Scroll up">${icon("up", 16)}</button><span class="before"></span><span class="thumb"></span><span class="rest"></span><button aria-label="Scroll down">${icon("chevd", 16)}</button></div>
        <div class="list">
          <table>
            <colgroup><col><col class="cd"><col class="ct"><col class="cs"><col class="ce"></colgroup>
            <thead><tr><th>Name</th><th>Date modified${icon("chevd", 12, 16, "sort")}</th><th>Type</th><th>Size</th><th></th></tr></thead>
            ${groups.map((g) => html`<tbody>
              <tr><td class="grp" colspan="4"><div class="gh">${icon("wide", 15, 16, "tw")}${g.title}<span class="ln"></span></div></td><td></td></tr>
              ${g.files.map(([i, n, d, t, s]) => html`<tr><td class="f"><a href="#">${icon(i, 17)}${n}</a></td><td>${d}</td><td>${t}</td><td class="sz">${s}</td><td></td></tr>`)}
            </tbody>`)}
          </table>
          <div class="gap"></div>
          <div class="hs"><button aria-label="Scroll left">${icon("chevl", 14)}</button><span class="thumb"></span><button aria-label="Scroll right">${icon("chevr", 15)}</button></div>
        </div>
      </div>
      <footer class="status"><span>4 items</span><span class="grow"></span><button class="on" aria-label="Details">${icon("details", 17)}</button><button aria-label="Large icons">${icon("pictures", 14)}</button></footer>`;
  }
}

@customElement("chrome-window")
class ChromeWindow extends LitElement {
  static styles = [base, css`
    :host { display: flex; flex-direction: column; background: #fff; overflow: hidden; box-shadow: 0 0 2px rgba(0,0,0,.5); color: #3c4043; }
    .strip { flex: none; height: 42px; padding-top: 8px; background: #e7eaed; display: flex; align-items: center; }
    .tab { width: 259px; height: 34px; background: #fff; border-radius: 0 8px 0 0; display: flex; align-items: center; padding: 0 8px 0 30px; color: #5f6368; }
    .tab span { flex: 1; margin-left: 9px; padding-bottom: 2px; }
    .new { margin-left: 14px; }
    .bar { flex: none; height: 43px; display: flex; align-items: center; padding: 0 8px 0 17px; border-bottom: 1px solid #dadce0; color: #aaa; }
    .bar > button { width: 32px; height: 32px; }
    .omni { flex: 1; height: 34px; border-radius: 17px; background: #f1f3f4; margin-left: 6px; display: flex; align-items: center; padding-left: 10px; gap: 8px; font-size: 13px; }
    .field { flex: 1; display: grid; align-items: center; }
    .field > * { grid-area: 1 / 1; }
    .url { color: #6a6e73; pointer-events: none; }
    .url b { font-weight: 400; color: #202124; }
    .info { flex: none; height: 45px; display: flex; align-items: center; padding-left: 29px; border-bottom: 1px solid #ccc; box-shadow: 0 1px 2px rgba(0,0,0,.2); font-size: 13px; }
    .info span { margin: 0 4px 0 18px; white-space: nowrap; }
    .info button { height: 31px; width: 103px; border-radius: 4px; background: #1a73e8; color: #fff; font-size: 11px; margin-bottom: 1px; }
  `];
  render() {
    return html`
      <div class="strip"><div class="tab">${icon("globe")}<span>Untitled</span><button aria-label="Close tab">${icon("x")}</button></div><button class="new" aria-label="New tab">${icon("plus", 15)}</button></div>
      <div class="bar"><button aria-label="Back">${icon("left")}</button><button aria-label="Forward">${icon("right")}</button><button aria-label="Reload">${icon("reload")}</button>
        <div class="omni">${icon("info", 16)}<div class="field"><input type="text" aria-label="Address"><span class="url"><b>litter.catbox.moe</b>/08uxe0.zip</span></div></div></div>
      <div class="info">${icon("chrome")}<span>Google Chrome isn't your default browser</span><button>Set as default</button></div>`;
  }
}

@customElement("task-bar")
class TaskBar extends LitElement {
  static styles = [base, css`
    :host { display: flex; height: 40px; background: linear-gradient(90deg, #232323 calc(100% - 275px), #040b1a calc(100% - 275px)); color: #fff; }
    .start { width: 48px; }
    .search { width: 288px; display: flex; align-items: center; background: #f2f2f2; border: 2px solid #b9bbc0; padding-left: 11px; gap: 10px; font-size: 14px; color: #333; overflow: hidden; }
    .search input { flex: 1; }
    .search input::placeholder { color: #333; opacity: 1; }
    .earth { display: block; flex: none; margin-right: 3px; }
    .app { width: 48px; margin-right: 1px; border-bottom: 2px solid transparent; }
    .app.view { width: 50px; }
    .app.on { background: #4f5050; border-color: #76b9ed; }
    .app.chrome { width: 40px; margin-left: 4px; background: linear-gradient(90deg, #3c7438 36px, #2f5a2c 36px); border-bottom: 3px solid #35d52c; }
    .grow { flex: 1; }
    .tray { width: 24px; }
    .clock { width: 63px; flex-direction: column; line-height: 18px; }
    .note { width: 42px; margin-right: 7px; }
    .peek { width: 5px; border-left: 1px solid #5f6570; }
  `];
  render() {
    return html`
      <button class="start" aria-label="Start">${icon("start")}</button>
      <label class="search">${icon("lens")}<input type="text" aria-label="Search" placeholder="Type here to search"><svg class="earth" width="70" height="36" viewBox="0 0 70 36" aria-hidden="true">${art.earth}</svg></label>
      <button class="app view" aria-label="Task View">${icon("taskview", 16)}</button>
      <button class="app" aria-label="Edge">${icon("edge", 26, 32)}</button>
      <button class="app on" aria-label="File Explorer">${icon("explorer", 24, 24)}</button>
      <button class="app" aria-label="Firefox">${icon("firefox", 24, 24)}</button>
      <button class="app chrome" aria-label="Chrome">${icon("chrome", 24)}</button>
      <span class="grow"></span>
      <button class="tray" aria-label="Hidden icons">${icon("trayup")}</button><button class="tray" aria-label="Meet Now">${icon("meet")}</button><button class="tray" aria-label="Network">${icon("net")}</button><button class="tray" aria-label="Volume">${icon("sound")}</button>
      <button class="clock"><span>2:36 AM</span><span>9/25/2024</span></button>
      <button class="note" aria-label="Notifications">${icon("note")}</button><button class="peek" aria-label="Show desktop"></button>`;
  }
}

@customElement("app-root")
class AppRoot extends LitElement {
  static styles = [base, css`
    :host { display: flex; flex-direction: column; height: 100vh; overflow: hidden; font: 11px/15px "Open Sans", "Noto Sans", sans-serif; }
    .desk { flex: 1; min-height: 0; position: relative; overflow: hidden;
      background: linear-gradient(97deg, #00a6fa 0%, #009ff5 28%, #0092ee 38%, #0078e0 52%, #0356cd 72%, #043eba 100%); }
    .icons { display: grid; grid-template-columns: repeat(3, 74px); grid-auto-rows: 109px; padding-top: 7px; }
    .icons a { display: flex; flex-direction: column; align-items: center; gap: 3px; text-align: center; color: #fff; text-shadow: 0 1px 2px rgba(0,0,0,.6); padding: 0 6px; position: relative; }
    .lnk { position: absolute; left: 14px; top: 35px; }
    .win { position: absolute; }
    .chrome { inset: 148px 275px 0 -40px; }
    .explorer { inset: 37px 72px 50px 423px; }
    .build { position: absolute; right: 5px; bottom: 0; color: #fff; text-align: right; line-height: 17px; }
    .mark { position: absolute; right: 50px; bottom: 10px; display: flex; align-items: center; gap: 5px; color: rgba(196,206,224,.55); font: 31px/36px Roboto, sans-serif; }
    task-bar { flex: none; }
  `];
  render() {
    return html`
      <main class="desk">
        <div class="icons">
          <a href="#">${icon("bin", 48, 50)}Recycle Bin</a>
          <a href="#">${icon("edge", 48, 32)}Microsoft Edge<svg class="lnk" width="12" height="12" viewBox="0 0 12 12"><path d="M0 0h12v12H0z" fill="#fff"/><path d="M3 10c0-4 1-5.500 4-5.500M4.500 2.500H9V7" fill="none" stroke="#24457c" stroke-width="2"/></svg></a>
          <a href="#">${icon("picfile", 48, 48)}independe...</a>
          <a href="#" aria-label="CCleaner">${icon("ccleaner", 48, 48)}</a>
          <a href="#" aria-label="Skype">${icon("skype", 48, 48)}</a>
          <a href="#" aria-label="Document">${icon("word", 48, 48)}</a>
        </div>
        <chrome-window class="win chrome"></chrome-window>
        <explorer-window class="win explorer"></explorer-window>
        <div class="build">Test Mode<br>Windows 10 Pro<br>Build 19041.vb_release.191206-1406</div>
        <div class="mark"><span>ANY</span><svg width="58" height="62" viewBox="0 0 58 64">${art.play}</svg><span>RUN</span></div>
      </main>
      <task-bar></task-bar>`;
  }
}
